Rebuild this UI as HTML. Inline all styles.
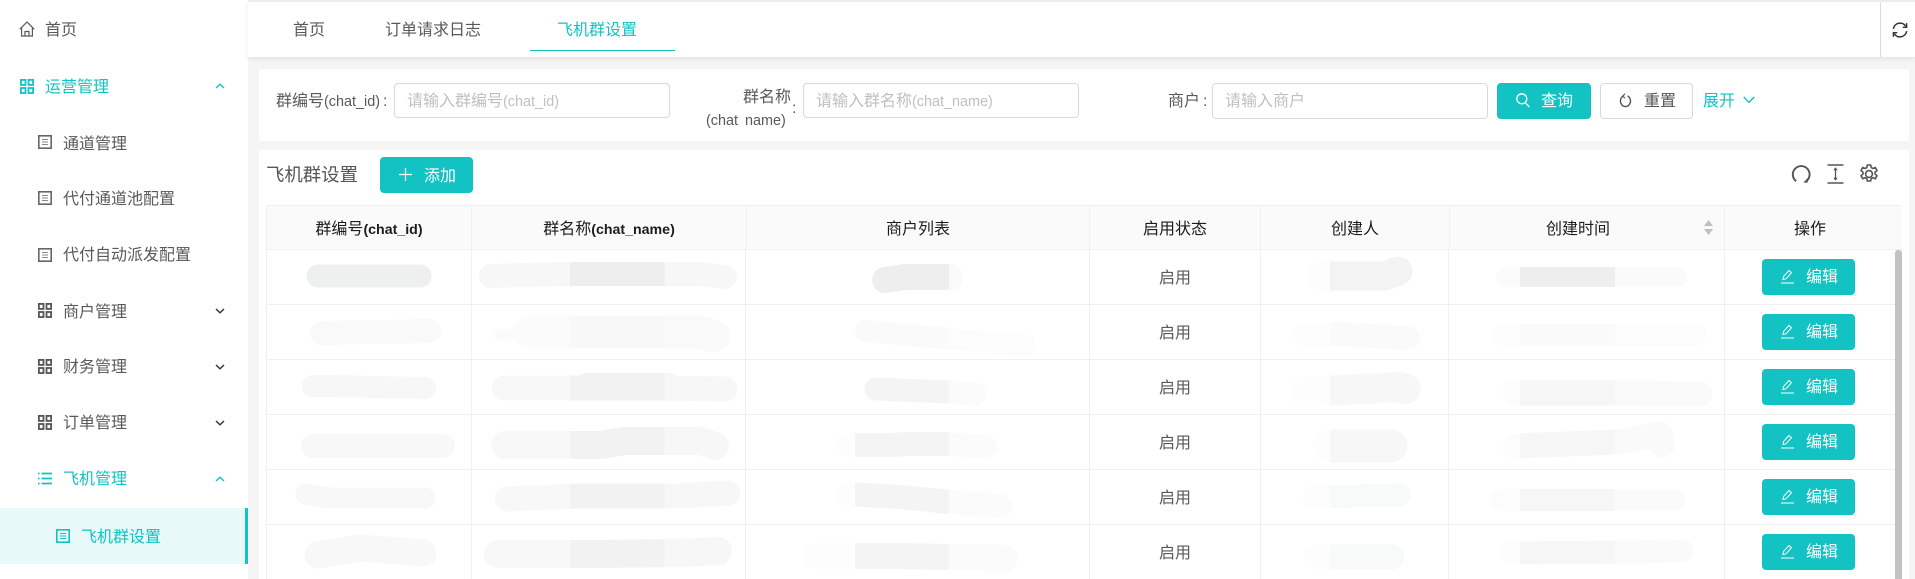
<!DOCTYPE html>
<html lang="zh-CN">
<head>
<meta charset="utf-8">
<title>飞机群设置</title>
<style>
html,body{margin:0;padding:0;width:1915px;height:579px;overflow:hidden;background:#f5f5f5;}
body{position:relative;font-family:"Liberation Sans","Noto Sans CJK SC",sans-serif;font-size:16px;color:#595959;}
.a{position:absolute;}
.t{position:absolute;white-space:nowrap;line-height:22px;height:22px;}
.c{text-align:center;}
.l{font-size:14.4px;}
.sb{position:absolute;left:0;top:0;width:248px;height:579px;background:#fff;}
.teal{color:#13c2c2;}
.inp{position:absolute;box-sizing:border-box;height:35px;border:1px solid #d9d9d9;border-radius:4px;background:#fff;color:#bfbfbf;line-height:31px;padding:2px 0 0 12px;white-space:nowrap;overflow:hidden;}
.btn{position:absolute;box-sizing:border-box;width:93px;height:36px;background:#13c2c2;border-radius:4px;color:#fff;}
.btn span{position:absolute;left:44px;top:8px;line-height:22px;white-space:nowrap;}
.btn svg{position:absolute;left:18px;top:10px;}
.th{position:absolute;top:219px;height:22px;line-height:22px;text-align:center;color:#1c1c1c;white-space:nowrap;}
.th b{font-weight:700;font-size:14.2px;}
.hl{position:absolute;height:1px;background:#f0f0f0;}
.vl{position:absolute;width:1px;background:#f0f0f0;}
svg{display:block;overflow:visible;}
</style>
</head>
<body>

<!-- sidebar -->
<div class="sb">
  <svg class="a" style="left:19px;top:21px" width="16" height="16" viewBox="0 0 16 16" fill="none" stroke="#595959" stroke-width="1.2"><path d="M.8 8.2 8 1l7.2 7.2M2.6 6.6V15h10.8V6.6M6 15v-4.5h4V15"/></svg>
  <div class="t" style="left:45px;top:20px">首页</div>

  <svg class="a" style="left:20px;top:79px" width="14" height="15" viewBox="0 0 14 15" fill="none" stroke="#13c2c2" stroke-width="1.8"><rect x=".9" y=".9" width="4.6" height="5"/><rect x="8.5" y=".9" width="4.6" height="5"/><rect x=".9" y="9" width="4.6" height="5"/><rect x="8.5" y="9" width="4.6" height="5"/></svg>
  <div class="t teal" style="left:45px;top:77px">运营管理</div>
  <svg class="a" style="left:215px;top:83px" width="10" height="6" viewBox="0 0 10 6" fill="none" stroke="#13c2c2" stroke-width="1.4"><path d="M1 5 5 1.2 9 5"/></svg>

  <svg class="a" style="left:38px;top:135px" width="14" height="14" viewBox="0 0 14 14" fill="none" stroke="#666"><rect x=".8" y=".8" width="12.4" height="12.4" stroke-width="1.6"/><path d="M4 4.5h6M4 7h6M4 9.5h6" stroke-width="1" stroke="#8a8a8a"/></svg>
  <div class="t" style="left:63px;top:134px">通道管理</div>

  <svg class="a" style="left:38px;top:191px" width="14" height="14" viewBox="0 0 14 14" fill="none" stroke="#666"><rect x=".8" y=".8" width="12.4" height="12.4" stroke-width="1.6"/><path d="M4 4.5h6M4 7h6M4 9.5h6" stroke-width="1" stroke="#8a8a8a"/></svg>
  <div class="t" style="left:63px;top:189px">代付通道池配置</div>

  <svg class="a" style="left:38px;top:248px" width="14" height="14" viewBox="0 0 14 14" fill="none" stroke="#666"><rect x=".8" y=".8" width="12.4" height="12.4" stroke-width="1.6"/><path d="M4 4.5h6M4 7h6M4 9.5h6" stroke-width="1" stroke="#8a8a8a"/></svg>
  <div class="t" style="left:63px;top:245px">代付自动派发配置</div>

  <svg class="a" style="left:38px;top:303px" width="14" height="15" viewBox="0 0 14 15" fill="none" stroke="#555" stroke-width="1.8"><rect x=".9" y=".9" width="4.6" height="5"/><rect x="8.5" y=".9" width="4.6" height="5"/><rect x=".9" y="9" width="4.6" height="5"/><rect x="8.5" y="9" width="4.6" height="5"/></svg>
  <div class="t" style="left:63px;top:302px">商户管理</div>
  <svg class="a" style="left:215px;top:308px" width="10" height="6" viewBox="0 0 10 6" fill="none" stroke="#333" stroke-width="1.4"><path d="M1 1 5 4.8 9 1"/></svg>

  <svg class="a" style="left:38px;top:359px" width="14" height="15" viewBox="0 0 14 15" fill="none" stroke="#555" stroke-width="1.8"><rect x=".9" y=".9" width="4.6" height="5"/><rect x="8.5" y=".9" width="4.6" height="5"/><rect x=".9" y="9" width="4.6" height="5"/><rect x="8.5" y="9" width="4.6" height="5"/></svg>
  <div class="t" style="left:63px;top:357px">财务管理</div>
  <svg class="a" style="left:215px;top:364px" width="10" height="6" viewBox="0 0 10 6" fill="none" stroke="#333" stroke-width="1.4"><path d="M1 1 5 4.8 9 1"/></svg>

  <svg class="a" style="left:38px;top:415px" width="14" height="15" viewBox="0 0 14 15" fill="none" stroke="#555" stroke-width="1.8"><rect x=".9" y=".9" width="4.6" height="5"/><rect x="8.5" y=".9" width="4.6" height="5"/><rect x=".9" y="9" width="4.6" height="5"/><rect x="8.5" y="9" width="4.6" height="5"/></svg>
  <div class="t" style="left:63px;top:413px">订单管理</div>
  <svg class="a" style="left:215px;top:420px" width="10" height="6" viewBox="0 0 10 6" fill="none" stroke="#333" stroke-width="1.4"><path d="M1 1 5 4.8 9 1"/></svg>

  <svg class="a" style="left:38px;top:472px" width="14" height="13" viewBox="0 0 14 13" fill="none" stroke="#13c2c2" stroke-width="1.8"><path d="M0 1.5h1.6M0 6.5h1.6M0 11.5h1.6M3.6 1.5H14M3.6 6.5H14M3.6 11.5H14"/></svg>
  <div class="t teal" style="left:63px;top:469px">飞机管理</div>
  <svg class="a" style="left:215px;top:476px" width="10" height="6" viewBox="0 0 10 6" fill="none" stroke="#13c2c2" stroke-width="1.4"><path d="M1 5 5 1.2 9 5"/></svg>

  <div class="a" style="left:0;top:508px;width:245px;height:56px;background:#e7f9f9;border-right:3px solid #13c2c2"></div>
  <svg class="a" style="left:56px;top:529px" width="14" height="14" viewBox="0 0 14 14" fill="none" stroke="#13c2c2"><rect x=".8" y=".8" width="12.4" height="12.4" stroke-width="1.6"/><path d="M4 4.5h6M4 7h6M4 9.5h6" stroke-width="1"/></svg>
  <div class="t teal" style="left:81px;top:527px">飞机群设置</div>
</div>

<!-- header tabs -->
<div class="a" style="left:248px;top:0;width:1667px;height:57px;background:#fff;border-top:2px solid #ececec;box-sizing:border-box;box-shadow:0 2px 5px rgba(0,0,0,.08)"></div>
<div class="t" style="left:293px;top:20px">首页</div>
<div class="t" style="left:385px;top:20px">订单请求日志</div>
<div class="t teal" style="left:557px;top:20px">飞机群设置</div>
<div class="a" style="left:530px;top:50px;width:145px;height:1px;background:#13c2c2"></div>
<div class="a" style="left:1880px;top:2px;width:1px;height:55px;background:#dcdcdc"></div>
<svg class="a" style="left:1892px;top:22px" width="16" height="16" viewBox="0 0 14 14" fill="none" stroke="#333" stroke-width="1.4"><path d="M1.2 6A5.9 5.9 0 0 1 12 3.7M12.8 8A5.9 5.9 0 0 1 2 10.3"/><path d="M12.8 1v3.6H9.4M1.2 13V9.4h3.4" stroke-width="1.2"/></svg>

<!-- search card -->
<div class="a" style="left:259px;top:69px;width:1650px;height:72px;background:#fff"></div>
<div class="t" style="left:276px;top:91px">群编号<span class="l">(chat_id)</span><span style="margin-left:3px">:</span></div>
<div class="inp" style="left:394px;top:83px;width:276px">请输入群编号<span class="l">(chat_id)</span></div>
<div class="t" style="left:743px;top:87px">群名称</div>
<div class="a" style="left:706px;top:110px;width:86px;height:22px;line-height:22px;overflow:hidden;white-space:nowrap;font-size:14.4px"><span>(chat</span><span style="margin-left:7px">name)</span></div>
<div class="t" style="left:792px;top:98px">:</div>
<div class="inp" style="left:803px;top:83px;width:276px">请输入群名称<span class="l">(chat_name)</span></div>
<div class="t" style="left:1168px;top:91px">商户<span style="margin-left:3px">:</span></div>
<div class="inp" style="left:1212px;top:83px;width:276px;height:36px">请输入商户</div>
<div class="btn" style="left:1497px;top:83px;width:94px">
  <svg style="left:19px;top:10px" width="14" height="15" viewBox="0 0 14 15" fill="none" stroke="#fff" stroke-width="1.3"><circle cx="5.8" cy="5.8" r="5"/><path d="M9.4 9.8 13.4 14"/></svg>
  <span>查询</span>
</div>
<div class="btn" style="left:1600px;top:83px;background:#fff;border:1px solid #d9d9d9;color:#555">
  <svg style="left:18px;top:9px" width="13" height="15" viewBox="0 0 13 15" fill="none" stroke="#555" stroke-width="1.4"><path d="M4 3.1A5 5.6 0 1 0 8.6 2.9"/><path d="M6 .8 3.6 3.2 6 5" stroke-width="1.1"/></svg>
  <span style="left:43px;top:7px">重置</span>
</div>
<div class="t teal" style="left:1703px;top:91px">展开</div>
<svg class="a" style="left:1743px;top:96px" width="12" height="8" viewBox="0 0 12 8" fill="none" stroke="#13c2c2" stroke-width="1.4"><path d="M.8 1 6 6.4 11.2 1"/></svg>

<!-- table card -->
<div class="a" style="left:259px;top:150px;width:1650px;height:429px;background:#fff"></div>
<div class="t" style="left:266px;top:164px;font-size:18.4px;color:#555">飞机群设置</div>
<div class="btn" style="left:380px;top:157px">
  <svg style="left:19px;top:11px" width="13" height="13" viewBox="0 0 13 13" fill="none" stroke="#fff" stroke-width="1.2"><path d="M6.5 0v13M0 6.5h13"/></svg>
  <span style="top:9px">添加</span>
</div>
<svg class="a" style="left:1791px;top:164px" width="20" height="20" viewBox="0 0 20 20" fill="none" stroke="#555" stroke-width="1.9"><path d="M5.2 17.2A8.4 8.4 0 1 1 15.2 17.2"/><path d="M12.4 18.6h4.4l-.2-4.6z" fill="#555" stroke="none"/></svg>
<svg class="a" style="left:1827px;top:164px" width="17" height="20" viewBox="0 0 17 20" fill="none" stroke="#555" stroke-width="1.3"><path d="M.5 1h16M.5 19h16" stroke-width="1.5"/><path d="M8.5 4v12"/><path d="M8.5 3.3 6.3 6.2h4.4zM8.5 16.7l-2.2-2.9h4.4z" fill="#555" stroke="none"/></svg>
<svg class="a" style="left:1859px;top:164px" width="20" height="20" viewBox="0 0 20 20" fill="none" stroke="#555" stroke-width="1.6"><path d="M8.3 1h3.4l.5 2.6 1.7.9 2.4-1 1.7 3-2 1.7v1.8l2 1.7-1.7 3-2.4-1-1.7.9-.5 2.4H8.3l-.5-2.4-1.7-.9-2.4 1-1.7-3 2-1.7V8.2l-2-1.7 1.7-3 2.4 1 1.7-.9z" stroke-linejoin="round"/><circle cx="10" cy="10" r="3.4"/></svg>

<!-- table -->
<div class="a" style="left:266px;top:205px;width:1636px;height:45px;background:#fafafa;border-top:1px solid #f0f0f0;border-bottom:1px solid #f0f0f0;box-sizing:border-box;border-radius:3px 3px 0 0"></div>

<!-- redaction smears -->
<svg class="a" style="left:0;top:0" width="1915" height="579" viewBox="0 0 1915 579" fill="none" stroke-linecap="round" stroke-linejoin="round">
<defs>
<linearGradient id="c2a" gradientUnits="userSpaceOnUse" x1="470" x2="750" y1="0" y2="0"><stop offset=".3571" stop-color="#f7f7f7"/><stop offset=".3571" stop-color="#eeeeee"/><stop offset=".6946" stop-color="#eeeeee"/><stop offset=".6946" stop-color="#f7f7f7"/></linearGradient>
<linearGradient id="c2b" gradientUnits="userSpaceOnUse" x1="470" x2="750" y1="0" y2="0"><stop offset=".3571" stop-color="#fbfbfb"/><stop offset=".3571" stop-color="#f8f8f8"/><stop offset=".6946" stop-color="#f8f8f8"/><stop offset=".6946" stop-color="#f9f9f9"/></linearGradient>
<linearGradient id="c2c" gradientUnits="userSpaceOnUse" x1="470" x2="750" y1="0" y2="0"><stop offset=".3571" stop-color="#f8f8f8"/><stop offset=".3571" stop-color="#f2f2f2"/><stop offset=".6946" stop-color="#f2f2f2"/><stop offset=".6946" stop-color="#f7f7f7"/></linearGradient>
<linearGradient id="c3a" gradientUnits="userSpaceOnUse" x1="800" x2="1050" y1="0" y2="0"><stop offset=".22" stop-color="#fdfdfd"/><stop offset=".22" stop-color="#eeeeee"/><stop offset=".596" stop-color="#eeeeee"/><stop offset=".596" stop-color="#fafafa"/></linearGradient>
<linearGradient id="c3b" gradientUnits="userSpaceOnUse" x1="800" x2="1050" y1="0" y2="0"><stop offset=".22" stop-color="#fefefe"/><stop offset=".22" stop-color="#fafafa"/><stop offset=".596" stop-color="#fafafa"/><stop offset=".596" stop-color="#fcfcfc"/></linearGradient>
<linearGradient id="c3c" gradientUnits="userSpaceOnUse" x1="800" x2="1050" y1="0" y2="0"><stop offset=".22" stop-color="#fdfdfd"/><stop offset=".22" stop-color="#f4f4f4"/><stop offset=".596" stop-color="#f4f4f4"/><stop offset=".596" stop-color="#fbfbfb"/></linearGradient>
<linearGradient id="c5a" gradientUnits="userSpaceOnUse" x1="1280" x2="1430" y1="0" y2="0"><stop offset=".3333" stop-color="#fcfcfc"/><stop offset=".3333" stop-color="#f3f3f3"/></linearGradient>
<linearGradient id="c5b" gradientUnits="userSpaceOnUse" x1="1280" x2="1430" y1="0" y2="0"><stop offset=".3333" stop-color="#fdfdfd"/><stop offset=".3333" stop-color="#fafafa"/></linearGradient>
<linearGradient id="c5c" gradientUnits="userSpaceOnUse" x1="1280" x2="1430" y1="0" y2="0"><stop offset=".3333" stop-color="#fdfdfd"/><stop offset=".3333" stop-color="#f7f7f7"/></linearGradient>
<linearGradient id="c5d" gradientUnits="userSpaceOnUse" x1="1280" x2="1430" y1="0" y2="0"><stop offset=".3333" stop-color="#fdfdfd"/><stop offset=".3333" stop-color="#f8f9f9"/></linearGradient>
<linearGradient id="c6a" gradientUnits="userSpaceOnUse" x1="1480" x2="1720" y1="0" y2="0"><stop offset=".1667" stop-color="#fbfbfb"/><stop offset=".1667" stop-color="#eeeeee"/><stop offset=".5625" stop-color="#eeeeee"/><stop offset=".5625" stop-color="#fafafa"/></linearGradient>
<linearGradient id="c6b" gradientUnits="userSpaceOnUse" x1="1480" x2="1720" y1="0" y2="0"><stop offset=".1667" stop-color="#fdfdfd"/><stop offset=".1667" stop-color="#fafafa"/><stop offset=".5625" stop-color="#fafafa"/><stop offset=".5625" stop-color="#fcfcfc"/></linearGradient>
<linearGradient id="c6c" gradientUnits="userSpaceOnUse" x1="1480" x2="1720" y1="0" y2="0"><stop offset=".1667" stop-color="#fcfcfc"/><stop offset=".1667" stop-color="#f6f6f6"/><stop offset=".5625" stop-color="#f6f6f6"/><stop offset=".5625" stop-color="#fafafa"/></linearGradient>
</defs>
<!-- col 1 -->
<path d="M318 276H420" stroke="#eef0f0" stroke-width="23"/>
<path d="M322 333L429 331" stroke="#f9f9f9" stroke-width="24"/>
<path d="M313 386H330L425 388" stroke="#f7f7f7" stroke-width="22"/>
<path d="M313 446H443" stroke="#f8f8f8" stroke-width="24"/>
<path d="M306 494L330 498L425 498" stroke="#f8f8f8" stroke-width="21"/>
<path d="M318 555L360 548L423 553" stroke="#f8f8f8" stroke-width="27"/>
<!-- col 2 -->
<path d="M491 276L560 274H700L725 277" stroke="url(#c2a)" stroke-width="24"/>
<path d="M500 335H525" stroke="url(#c2b)" stroke-width="12"/>
<path d="M530 332H700L713 336" stroke="url(#c2b)" stroke-width="33"/>
<path d="M504 388H660L725 389" stroke="url(#c2c)" stroke-width="25"/>
<path d="M585 380H670" stroke="url(#c2c)" stroke-width="14"/>
<path d="M505 445H600L625 441H700L715 446" stroke="url(#c2c)" stroke-width="28"/>
<path d="M507 499L580 496H680L728 493" stroke="url(#c2c)" stroke-width="25"/>
<path d="M498 554H600L680 553L718 551" stroke="url(#c2c)" stroke-width="28"/>
<!-- col 3 -->
<path d="M885 280L905 277H950" stroke="url(#c3a)" stroke-width="26"/>
<path d="M866 331L950 339L1026 346" stroke="url(#c3b)" stroke-width="22"/>
<path d="M876 389L950 392L975 394" stroke="url(#c3c)" stroke-width="23"/>
<path d="M848 445H895L905 444H950L985 447" stroke="url(#c3c)" stroke-width="24"/>
<path d="M848 494L900 497L950 502L1000 506" stroke="url(#c3c)" stroke-width="24"/>
<path d="M815 556H900L950 557L1005 558" stroke="url(#c3c)" stroke-width="26"/>
<!-- col 5 -->
<path d="M1322 276H1385L1398 271" stroke="url(#c5a)" stroke-width="29"/>
<path d="M1305 335L1335 334L1408 338" stroke="url(#c5b)" stroke-width="24"/>
<path d="M1304 392L1400 387L1406 389" stroke="url(#c5c)" stroke-width="30"/>
<path d="M1329 446H1391" stroke="url(#c5c)" stroke-width="33"/>
<path d="M1314 497L1399 495" stroke="url(#c5d)" stroke-width="23"/>
<path d="M1316 557H1392" stroke="url(#c5d)" stroke-width="25"/>
<!-- col 6 -->
<path d="M1506 277H1677" stroke="url(#c6a)" stroke-width="20"/>
<path d="M1502 335H1695" stroke="url(#c6b)" stroke-width="22"/>
<path d="M1515 393H1620L1700 394" stroke="url(#c6c)" stroke-width="25"/>
<path d="M1515 446L1620 442L1660 434L1662 445" stroke="url(#c6c)" stroke-width="25"/>
<path d="M1500 500H1674" stroke="url(#c6c)" stroke-width="22"/>
<path d="M1512 553L1620 552L1682 551" stroke="url(#c6c)" stroke-width="23"/>
</svg>

<!-- grid lines -->
<div class="hl" style="left:266px;top:304px;width:1629px"></div>
<div class="hl" style="left:266px;top:359px;width:1629px"></div>
<div class="hl" style="left:266px;top:414px;width:1629px"></div>
<div class="hl" style="left:266px;top:469px;width:1629px"></div>
<div class="hl" style="left:266px;top:524px;width:1629px"></div>
<div class="vl" style="left:266px;top:205px;height:374px"></div>
<div class="vl" style="left:471px;top:205px;height:374px"></div>
<div class="vl" style="left:745px;top:249px;height:330px"></div>
<div class="vl" style="left:746px;top:205px;height:44px"></div>
<div class="vl" style="left:1089px;top:205px;height:374px"></div>
<div class="vl" style="left:1260px;top:205px;height:374px"></div>
<div class="vl" style="left:1448px;top:249px;height:330px"></div>
<div class="vl" style="left:1449px;top:205px;height:44px"></div>
<div class="vl" style="left:1724px;top:205px;height:374px"></div>
<div class="a" style="left:1895px;top:250px;width:7px;height:329px;background:#c2c2c4;border-radius:3px 3px 0 0"></div>

<!-- table head -->
<div class="th" style="left:267px;width:204px"><span>群编号</span><b>(chat_id)</b></div>
<div class="th" style="left:472px;width:274px"><span>群名称</span><b>(chat_name)</b></div>
<div class="th" style="left:747px;width:342px">商户列表</div>
<div class="th" style="left:1090px;width:170px">启用状态</div>
<div class="th" style="left:1261px;width:188px">创建人</div>
<div class="th" style="left:1450px;width:256px">创建时间</div>
<div class="th" style="left:1725px;width:170px">操作</div>
<svg class="a" style="left:1704px;top:220px" width="9" height="15" viewBox="0 0 9 15" fill="#bfbfbf"><path d="M4.5 0 9 6H0zM4.5 15 0 9h9z"/></svg>

<!-- rows -->
<div class="t c" style="left:1090px;top:268px;width:170px">启用</div>
<div class="t c" style="left:1090px;top:323px;width:170px">启用</div>
<div class="t c" style="left:1090px;top:378px;width:170px">启用</div>
<div class="t c" style="left:1090px;top:433px;width:170px">启用</div>
<div class="t c" style="left:1090px;top:488px;width:170px">启用</div>
<div class="t c" style="left:1090px;top:543px;width:170px">启用</div>

<div class="btn" style="left:1762px;top:259px"><svg style="left:18px;top:10px" width="15" height="15" viewBox="0 0 15 15" fill="none" stroke="#fff" stroke-width="1"><path d="M3 10.5 3.5 7.5 9 1.5l2.5 2.2L6 9.8zM1 14h13"/></svg><span>编辑</span></div>
<div class="btn" style="left:1762px;top:314px"><svg style="left:18px;top:10px" width="15" height="15" viewBox="0 0 15 15" fill="none" stroke="#fff" stroke-width="1"><path d="M3 10.5 3.5 7.5 9 1.5l2.5 2.2L6 9.8zM1 14h13"/></svg><span>编辑</span></div>
<div class="btn" style="left:1762px;top:369px"><svg style="left:18px;top:10px" width="15" height="15" viewBox="0 0 15 15" fill="none" stroke="#fff" stroke-width="1"><path d="M3 10.5 3.5 7.5 9 1.5l2.5 2.2L6 9.8zM1 14h13"/></svg><span>编辑</span></div>
<div class="btn" style="left:1762px;top:424px"><svg style="left:18px;top:10px" width="15" height="15" viewBox="0 0 15 15" fill="none" stroke="#fff" stroke-width="1"><path d="M3 10.5 3.5 7.5 9 1.5l2.5 2.2L6 9.8zM1 14h13"/></svg><span>编辑</span></div>
<div class="btn" style="left:1762px;top:479px"><svg style="left:18px;top:10px" width="15" height="15" viewBox="0 0 15 15" fill="none" stroke="#fff" stroke-width="1"><path d="M3 10.5 3.5 7.5 9 1.5l2.5 2.2L6 9.8zM1 14h13"/></svg><span>编辑</span></div>
<div class="btn" style="left:1762px;top:534px"><svg style="left:18px;top:10px" width="15" height="15" viewBox="0 0 15 15" fill="none" stroke="#fff" stroke-width="1"><path d="M3 10.5 3.5 7.5 9 1.5l2.5 2.2L6 9.8zM1 14h13"/></svg><span>编辑</span></div>

</body>
</html>
